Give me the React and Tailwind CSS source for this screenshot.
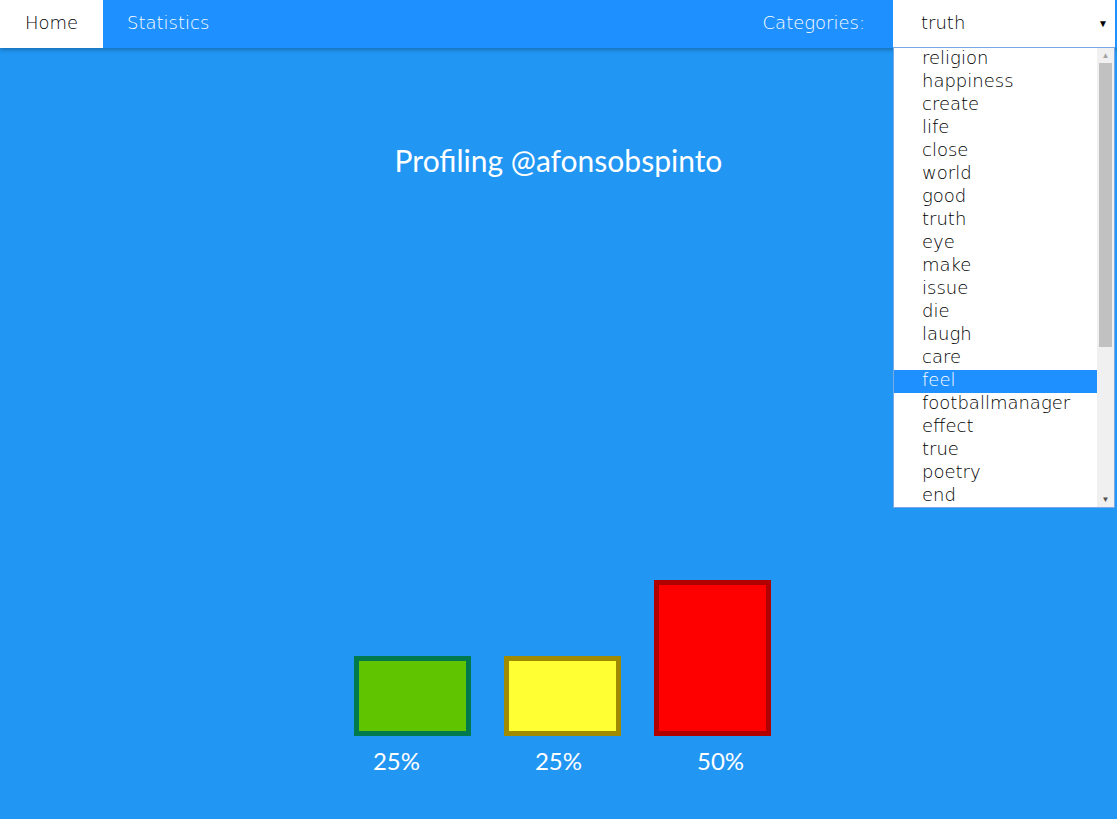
import React from 'react';

const categories = [
  'religion', 'happiness', 'create', 'life', 'close', 'world', 'good', 'truth', 'eye', 'make',
  'issue', 'die', 'laugh', 'care', 'feel', 'footballmanager', 'effect', 'true', 'poetry', 'end',
];

const bars = [
  { h: 'h-[80px]', cls: 'bg-[#60c400] border-[#007a4d]' },
  { h: 'h-[80px]', cls: 'bg-[#ffff33] border-[#a08a00]' },
  { h: 'h-[156px]', cls: 'bg-[#ff0000] border-[#b00000]' },
];

const labels = ['25%', '25%', '50%'];

const App = () => {
  return (
    <div className="min-h-[819px] bg-[#2196f3] relative overflow-hidden">
      <nav
        className="h-12 bg-[#1e90ff] flex items-stretch shadow-[0_2px_4px_rgba(0,0,0,0.25)] relative z-10 text-[18px]"
        style={{ fontFamily: '"DejaVu Sans", "Noto Sans", sans-serif' }}
      >
        <div className="w-[103px] bg-white text-black flex items-center justify-center pb-1 font-light">Home</div>
        <div className="pl-6 text-white flex items-center pb-1 font-light">Statistics</div>
        <div className="flex-1" />
        <div className="text-white flex items-center pb-1 pr-7 font-light">Categories:</div>
        <div className="w-[222px] bg-white flex items-center pb-1 pl-7 pr-2 mr-[2px] relative text-black font-light">
          truth
          <span className="absolute right-[7px] top-[16px] text-[10px] text-black">▼</span>
        </div>
      </nav>

      <main className="flex flex-col items-center" style={{ fontFamily: 'Lato, sans-serif' }}>
        <h1 className="mt-[90px] text-[30px] text-white">Profiling @afonsobspinto</h1>
        <div className="mt-[397px] flex items-end gap-[33px] ml-[7px]">
          {bars.map((b, i) => (
            <div key={i} className={`w-[117px] ${b.h} border-[5px] ${b.cls}`} />
          ))}
        </div>
        <div className="mt-[7px] flex gap-[115px] text-[24px] text-white">
          {labels.map((l, i) => (
            <span key={i}>{l}</span>
          ))}
        </div>
      </main>

      <div
        className="absolute left-[893px] top-[47px] w-[222px] h-[461px] bg-white border border-[#7aa7e8] flex z-20 text-[18px] font-light"
        style={{ fontFamily: '"DejaVu Sans", "Noto Sans", sans-serif' }}
      >
        <ul className="flex-1">
          {categories.map((c) => (
            <li
              key={c}
              className={`h-[23px] leading-[19px] pl-7 ${c === 'feel' ? 'bg-[#1e90ff] text-white' : 'text-black'}`}
            >
              {c}
            </li>
          ))}
        </ul>
        <div className="w-[17px] bg-[#f0f0f0] flex flex-col items-center">
          <span className="text-[8px] text-[#a3a3a3] h-[15px] leading-[15px]">▲</span>
          <div className="w-[13px] h-[284px] bg-[#c1c1c1]" />
          <div className="flex-1" />
          <span className="text-[8px] text-[#505050] h-[15px] leading-[15px]">▼</span>
        </div>
      </div>
    </div>
  );
};

export default App;
